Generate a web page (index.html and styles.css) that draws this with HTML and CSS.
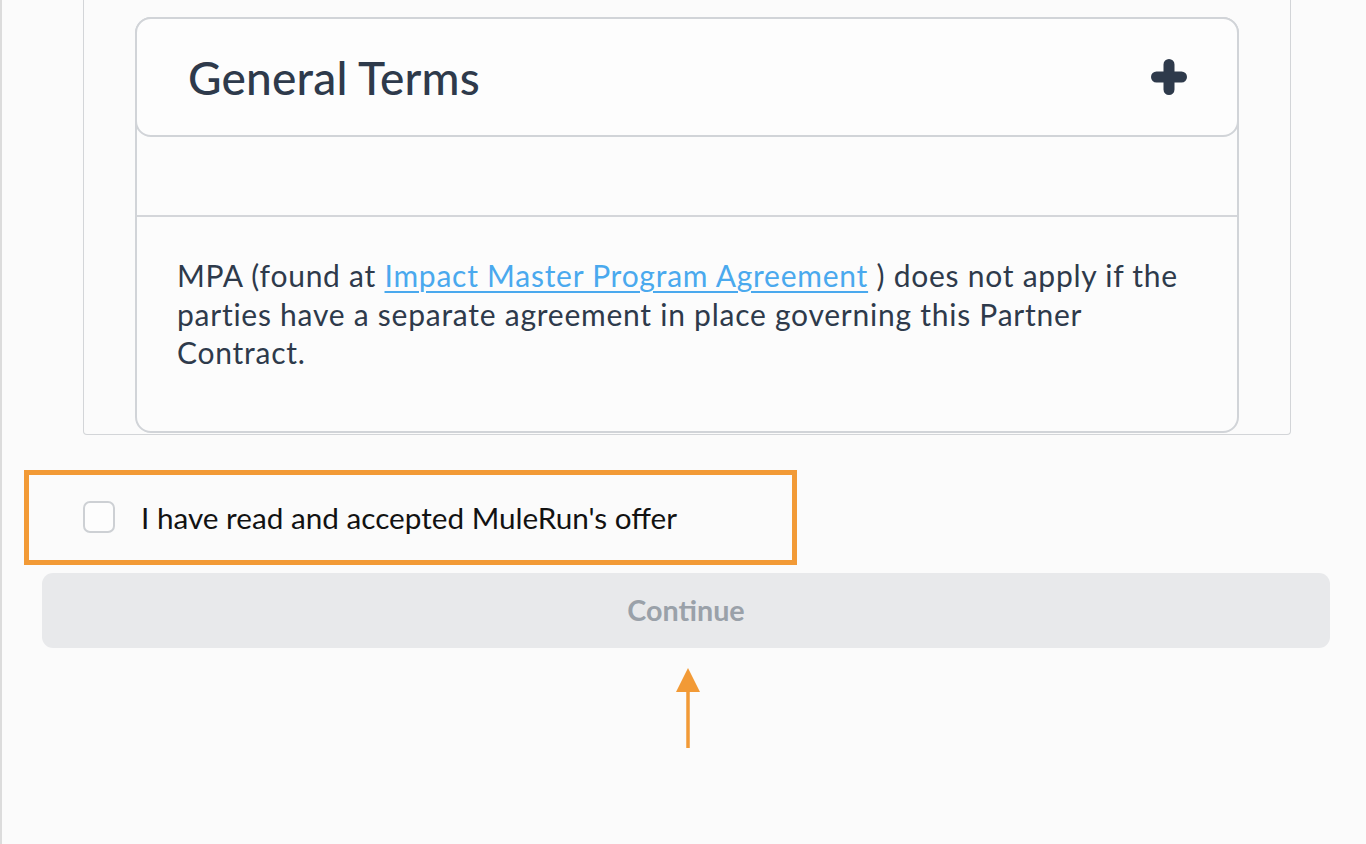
FILE: index.html
```html
<!DOCTYPE html>
<html lang="en">
<head>
<meta charset="utf-8">
<title>Partner Contract</title>
<link rel="stylesheet" href="styles.css">
</head>
<body>
<div class="page">
  <div class="frame">
    <section class="card">
      <header class="card-head">
        <h2 class="card-title">General Terms</h2>
        <svg class="plus" viewBox="0 0 36 36" width="36" height="36" aria-hidden="true">
          <path d="M18 5.5 V30.5 M5.5 18 H30.5" stroke="#2e3a4b" stroke-width="11" stroke-linecap="round" fill="none"/>
        </svg>
      </header>
      <div class="card-spacer"></div>
      <div class="card-body">
        <p>MPA (found at <a href="#" class="link">Impact Master Program Agreement</a> ) does not apply if the parties have a separate agreement in place governing this Partner Contract.</p>
      </div>
    </section>
  </div>

  <div class="accept">
    <label class="accept-row">
      <span class="checkbox"></span>
      <span class="accept-text">I have read and accepted MuleRun's offer</span>
    </label>
  </div>

  <button class="continue" type="button" disabled>Continue</button>

  <div class="arrow-wrap">
    <svg class="arrow" viewBox="0 0 26 82" width="26" height="82" aria-hidden="true">
      <polygon points="13,0 25,24 1,24" fill="#f29a36"/>
      <line x1="13" y1="20" x2="13" y2="80" stroke="#f29a36" stroke-width="3.5"/>
    </svg>
  </div>
</div>
</body>
</html>
```

FILE: styles.css
```css
* { box-sizing: border-box; }

html, body {
  margin: 0;
  padding: 0;
  height: 100%;
}

body {
  background: #fbfbfb;
  font-family: "Lato", "Noto Sans", sans-serif;
  color: #2e3a4b;
  overflow: hidden;
}

.page {
  min-height: 100%;
  border-left: 2px solid #dcdcdc;
  display: flex;
  flex-direction: column;
}

.frame {
  margin-left: 81px;
  width: 1208px;
  border: 1px solid #d3d5d8;
  border-top: none;
  border-radius: 0 0 4px 4px;
  padding: 17px 51px 1px 51px;
}

.card {
  border: 2px solid #d1d4d8;
  border-radius: 16px;
  background: #fcfcfc;
}

.card-head {
  height: 120px;
  margin: -2px -2px 0 -2px;
  border: 2px solid #d1d4d8;
  border-radius: 16px;
  display: flex;
  align-items: center;
  justify-content: space-between;
  padding: 0 50px 0 51px;
  background: #fdfdfd;
}

.card-title {
  margin: 0;
  font-size: 46px;
  font-weight: 500;
  color: #2e3a4b;
  letter-spacing: 0.2px;
}

.plus { display: block; }

.card-spacer {
  height: 80px;
  border-bottom: 2px solid #d4d6da;
}

.card-body {
  padding: 39px 40px 59px 40px;
}

.card-body p {
  margin: 0;
  font-size: 30px;
  line-height: 38.5px;
  letter-spacing: 0.75px;
  color: #2e3a4b;
}

.link {
  color: #4aa9ee;
  text-decoration: underline;
  text-decoration-thickness: 2px;
  text-underline-offset: 4px;
}

.accept {
  margin: 35px 0 0 22px;
  width: 773px;
  height: 95px;
  border: 5px solid #f29a36;
  display: flex;
  align-items: center;
  padding-left: 54px;
}

.accept-row {
  display: flex;
  align-items: center;
  gap: 26px;
}

.checkbox {
  width: 32px;
  height: 32px;
  border: 2px solid #cdd0d4;
  border-radius: 7px;
  background: #fdfdfd;
  flex: none;
}

.accept-text {
  font-size: 29.7px;
  color: #121212;
}

.continue {
  margin: 8px 0 0 40px;
  width: 1288px;
  height: 75px;
  border: none;
  border-radius: 11px;
  background: #e8e9eb;
  color: #9aa1a9;
  font-family: inherit;
  font-size: 28.7px;
  font-weight: 700;
}

.arrow-wrap {
  display: flex;
  justify-content: center;
  padding: 20px 0 0 8px;
}

.arrow { display: block; }
```
